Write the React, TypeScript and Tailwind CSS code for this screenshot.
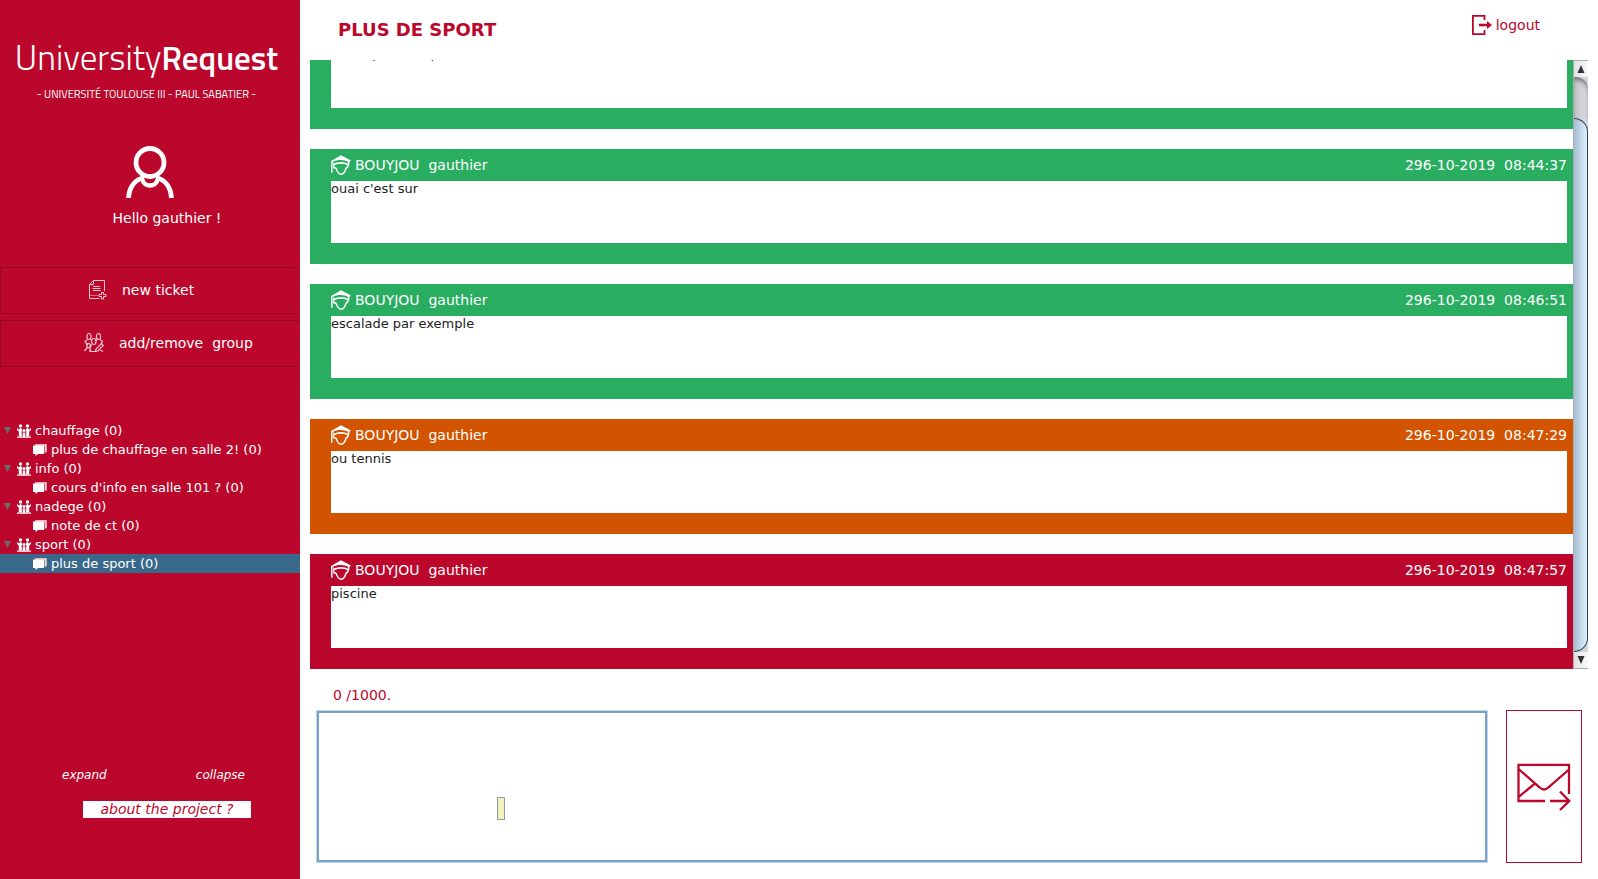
import React from "react";

type Message = { text: string; time?: string; tone: string };

const messages: Message[] = [
  { text: "il faut plus de sport", tone: "bg-[#29ae61]" },
  { text: "ouai c'est sur", time: "296-10-2019  08:44:37", tone: "bg-[#29ae61]" },
  { text: "escalade par exemple", time: "296-10-2019  08:46:51", tone: "bg-[#29ae61]" },
  { text: "ou tennis", time: "296-10-2019  08:47:29", tone: "bg-[#d35400]" },
  { text: "piscine", time: "296-10-2019  08:47:57", tone: "bg-[#bb072c]" },
];

const groups = [
  { name: "chauffage (0)", tickets: ["plus de chauffage en salle 2! (0)"] },
  { name: "info (0)", tickets: ["cours d'info en salle 101 ? (0)"] },
  { name: "nadege (0)", tickets: ["note de ct (0)"] },
  { name: "sport (0)", tickets: ["plus de sport (0)"] },
];

const selectedTicket = "plus de sport (0)";

function UserIcon() {
  return (
    <svg width="48" height="52" viewBox="0 0 48 52" fill="none" stroke="currentColor" strokeWidth="4.8" aria-hidden="true">
      <circle cx="24" cy="16.500" r="14" />
      <path d="M2.600 52C3 41 9 33.500 18 31.500M45.400 52C45 41 39 33.500 30 31.500" />
      <path d="M16.500 33.500C17.500 41.500 30.500 41.500 31.500 33.500" strokeWidth="4.500" />
    </svg>
  );
}

function NewTicketIcon() {
  return (
    <svg width="18" height="20" viewBox="0 0 18 20" fill="none" stroke="#f3c5cf" strokeWidth="1" aria-hidden="true">
      <path d="M4.500 .5H15.500V11M.5 4.500V18.500H10.500M.5 4.500L4.500 .5V4.500H.5" />
      <path d="M4 6.500H11M3.500 8.500H11.500M4 10.500H11.500" />
      <path d="M1.500 15.500H9" strokeDasharray="1 1" />
      <path d="M12.500 12.500H14.500V14.500H17V16.500H14.500V19H12.500V16.500H10V14.500H12.500Z" />
    </svg>
  );
}

function EditGroupIcon() {
  return (
    <svg width="20" height="20" viewBox="0 0 20 20" fill="none" stroke="#f3c5cf" strokeWidth="1.200" aria-hidden="true">
      <ellipse cx="5" cy="3.500" rx="2.100" ry="3" />
      <ellipse cx="14.500" cy="3.500" rx="2.100" ry="3" />
      <ellipse cx="9.800" cy="8.500" rx="2.200" ry="3" />
      <path d="M3.500 6.500L.8 8.500M6.500 6.500L7.800 7.500M13.200 6.500L12 7.500M16 6.500L18.800 8.500M.8 8.500L4 12M18.800 8.500L16 12" />
      <ellipse cx="4.500" cy="12.500" rx="1.800" ry="2.200" />
      <path d="M3.500 14.500L.5 18M5.500 14.500L7 17.500M8 11.500L6 14.500V18.500H12" />
      <path d="M11.500 18.500L12 16L17.500 10.500L19.300 12.300L13.800 18Z" />
      <path d="M16 17L19 18.500" />
    </svg>
  );
}

function GroupIcon() {
  return (
    <svg width="14" height="14" viewBox="0 0 14 14" fill="currentColor" aria-hidden="true" className="shrink-0">
      <circle cx="3.500" cy="2" r="1.700" />
      <circle cx="10.500" cy="2" r="1.700" />
      <path d="M0 4L2 5.500L3.500 3.800L5.200 5.500L4.600 8L5 12.500H1.800V7.500L0 6Z" />
      <path d="M14 4L12 5.500L10.500 3.800L8.800 5.500L9.400 8L9 12.500H12.200V7.500L14 6Z" />
      <circle cx="7" cy="6.500" r="1.500" />
      <path d="M5.700 8.500H8.300V12.500H5.700ZM0 12.500H14V13.800H0Z" />
    </svg>
  );
}

function TicketIcon() {
  return (
    <svg width="14" height="12" viewBox="0 0 14 12" aria-hidden="true" className="shrink-0">
      <path d="M2.500 0H13.500V8L11.500 9V2H1.500Z" fill="#eab5c1" />
      <path d="M13 .5V8.500" fill="none" stroke="#fff" strokeWidth=".8" />
      <path d="M0 1.500H11V10H5L2.500 12V10H0Z" fill="#fff" />
    </svg>
  );
}

function StudentIcon() {
  return (
    <svg width="20" height="20" viewBox="0 0 20 20" fill="none" stroke="currentColor" aria-hidden="true">
      <path d="M0 6L10 .2L20 5.600L17.800 7.500C13.500 4.400 6.500 4.400 1.800 7Z" fill="currentColor" stroke="none" />
      <path d="M.8 6V17.800" strokeWidth="1.500" />
      <path d="M3.200 9.400C7 7.400 13 7.400 16.800 9.400" strokeWidth="1.700" />
      <path d="M2.800 7.500V13.500" strokeWidth="1.200" />
      <path d="M17.600 7C18 10 17 12 15 13.300C14 17.200 12 19.200 10.200 19.200C8.200 19.200 6.300 17.200 5.200 13.600L3 12.300" strokeWidth="1.500" />
    </svg>
  );
}

function LogoutIcon() {
  return (
    <svg width="20" height="20" viewBox="0 0 20 20" fill="none" stroke="currentColor" strokeWidth="1.800" aria-hidden="true">
      <path d="M12.500 5V.9H.9V19.100H12.500V15" />
      <path d="M7 10H17" strokeWidth="2.600" />
      <path d="M15 6L20 10L15 14Z" fill="currentColor" stroke="none" />
    </svg>
  );
}

function SendIcon() {
  return (
    <svg width="54" height="48" viewBox="0 0 54 48" fill="none" stroke="currentColor" strokeWidth="2.300" aria-hidden="true">
      <path d="M28 38H1.500V1.800H52V31" />
      <path d="M1.500 6L22.500 24.300C25.500 27.300 28.500 27.300 31.500 24.300L52 6.500M1.500 34L18 20.500" />
      <path d="M33 38H52M43 28.500L52.300 38L43 47" />
    </svg>
  );
}

function Card({ message }: { message: Message }) {
  return (
    <article className={`${message.tone} shrink-0 pr-[6px] pb-[21px] pl-[21px]`}>
      {message.time && (
        <header className="flex h-8 items-center justify-between text-white">
          <div className="flex items-center gap-1">
            <StudentIcon />
            <span className="whitespace-pre">{"BOUYJOU  gauthier"}</span>
          </div>
          <time className="whitespace-pre">{message.time}</time>
        </header>
      )}
      <p className="h-[62px] bg-white text-[13px] leading-4 text-[#222]">{message.text}</p>
    </article>
  );
}

function ScrollBar() {
  return (
    <div className="flex w-[15px] shrink-0 flex-col border-l border-[#a9adb3] bg-[#d5d6dc]">
      <button aria-label="Scroll up" className="flex h-[17px] items-center justify-center border-t border-[#aaa] bg-linear-to-r from-[#e2e2e4] to-[#f8f9fb]">
        <svg width="8" height="8" viewBox="0 0 8 8" fill="#333" aria-hidden="true"><path d="M4 0L7.500 8H.5Z" /></svg>
      </button>
      <div className="h-[41px] rounded-tr-xl bg-linear-to-r from-[#c5c5cc] to-[#dadbe2] shadow-[inset_0_4px_4px_-1px_#77777c]" />
      <div className="min-h-0 grow rounded-r-2xl border-y border-r border-[#2c4458] bg-linear-to-r from-[#a9bdd2] via-[#c1d6e8] to-[#def3fc]" />
      <button aria-label="Scroll down" className="flex h-[17px] items-center justify-center border-b border-[#aaa] bg-linear-to-r from-[#e2e2e4] to-[#f8f9fb]">
        <svg width="8" height="8" viewBox="0 0 8 8" fill="#333" aria-hidden="true"><path d="M.5 0H7.500L4 8Z" /></svg>
      </button>
    </div>
  );
}

function Sidebar() {
  return (
    <aside className="flex w-[300px] shrink-0 flex-col bg-[#bb072c] text-white">
      <div className="flex flex-col items-center pt-[33px] pr-[7px] font-['Titillium_Web','Open_Sans',sans-serif]">
        <h1 className="text-[35px] leading-[48px] font-light whitespace-nowrap">
          University<strong className="text-[33px] font-semibold">Request</strong>
        </h1>
        <p className="text-[11px] leading-6 whitespace-nowrap">- UNIVERSITÉ TOULOUSE III - PAUL SABATIER -</p>
      </div>
      <div className="flex flex-col items-center pt-10">
        <UserIcon />
        <p className="mt-[10px] pl-[34px] leading-5">Hello gauthier !</p>
      </div>
      <div className="mt-[39px] flex flex-col gap-[6px]">
        <button className="flex h-[47px] items-center gap-[15px] border border-r-0 border-[#970624] pb-[2px] pl-[88px]">
          <NewTicketIcon />
          <span>new ticket</span>
        </button>
        <button className="flex h-[47px] items-center gap-[15px] border border-r-0 border-[#970624] pb-[2px] pl-[83px]">
          <EditGroupIcon />
          <span className="whitespace-pre">{"add/remove  group"}</span>
        </button>
      </div>
      <ul className="mt-[54px] text-[13px] leading-[19px]">
        {groups.map((group) => (
          <li key={group.name}>
            <button className="flex w-full items-center pl-1">
              <svg width="7" height="7" viewBox="0 0 7 7" fill="#6b6b6b" aria-hidden="true" className="mr-[6px]"><path d="M0 0H7L3.500 7Z" /></svg>
              <GroupIcon />
              <span className="ml-1">{group.name}</span>
            </button>
            <ul>
              {group.tickets.map((ticket) => (
                <li key={ticket} className={ticket === selectedTicket ? "bg-[#39698a]" : ""}>
                  <button className="flex w-full items-center gap-1 pl-[33px]">
                    <TicketIcon />
                    <span>{ticket}</span>
                  </button>
                </li>
              ))}
            </ul>
          </li>
        ))}
      </ul>
      <div className="mt-auto flex justify-between pr-[55px] pl-[62px] text-xs italic">
        <button>expand</button>
        <button>collapse</button>
      </div>
      <button className="mt-[18px] mb-[61px] ml-[83px] w-[168px] bg-white leading-[17px] text-[#bb072c] italic">about the project ?</button>
    </aside>
  );
}

export default function App() {
  return (
    <div className="flex h-screen bg-white font-['DejaVu_Sans',sans-serif] text-sm">
      <Sidebar />
      <main className="flex min-w-0 grow flex-col pr-[10px] pl-[10px]">
        <header className="flex h-[60px] shrink-0 items-start justify-between pr-12 pl-7 text-[#bb072c]">
          <h2 className="pt-4 text-lg font-bold">PLUS DE SPORT</h2>
          <button className="flex items-center gap-1 pt-[15px]">
            <LogoutIcon />
            <span>logout</span>
          </button>
        </header>
        <section className="flex min-h-0 grow">
          <div className="flex min-w-0 grow flex-col justify-end gap-5 overflow-hidden">
            {messages.map((message) => (
              <Card key={message.text} message={message} />
            ))}
          </div>
          <ScrollBar />
        </section>
        <form className="shrink-0 pt-4 pr-[6px] pb-4 pl-[6px]" onSubmit={(event) => event.preventDefault()}>
          <label htmlFor="message" className="block pl-[17px] leading-5 text-[#bb072c]">0 /1000.</label>
          <div className="mt-[5px] flex h-[153px] gap-[18px]">
            <div className="relative grow border border-[#bcd6f0]">
              <textarea id="message" maxLength={1000} className="block h-full w-full resize-none border-2 border-[#7d9fc3] outline-none" />
              <div role="tooltip" className="absolute top-[86px] left-[180px] h-[23px] w-2 border border-[#9297a1] bg-[#f2f2bd]" />
            </div>
            <button aria-label="Send" className="flex w-[76px] items-center justify-center border border-[#bb072c] text-[#bb072c]">
              <SendIcon />
            </button>
          </div>
        </form>
      </main>
    </div>
  );
}
